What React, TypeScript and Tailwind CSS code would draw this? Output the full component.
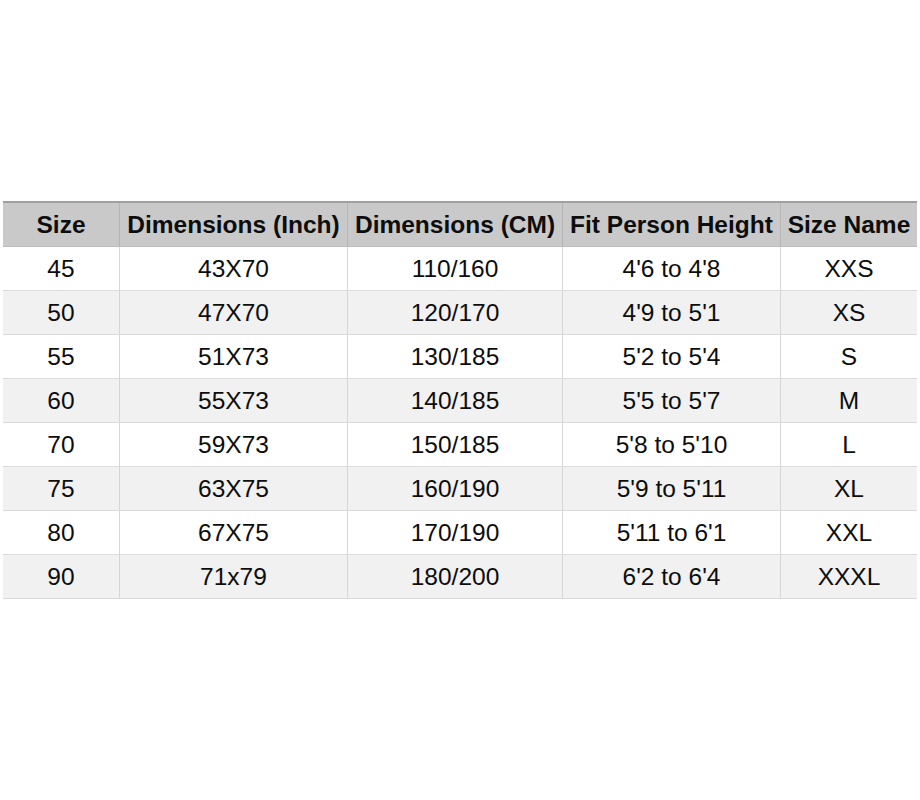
import React from 'react';

const headers = ['Size', 'Dimensions (Inch)', 'Dimensions (CM)', 'Fit Person Height', 'Size Name'];

const rows: string[][] = [
  ['45', '43X70', '110/160', "4'6 to 4'8", 'XXS'],
  ['50', '47X70', '120/170', "4'9 to 5'1", 'XS'],
  ['55', '51X73', '130/185', "5'2 to 5'4", 'S'],
  ['60', '55X73', '140/185', "5'5 to 5'7", 'M'],
  ['70', '59X73', '150/185', "5'8 to 5'10", 'L'],
  ['75', '63X75', '160/190', "5'9 to 5'11", 'XL'],
  ['80', '67X75', '170/190', "5'11 to 6'1", 'XXL'],
  ['90', '71x79', '180/200', "6'2 to 6'4", 'XXXL'],
];

const cols = 'grid grid-cols-[116px_228px_215px_218px_137px]';

export default function App() {
  return (
    <div className="w-[920px] h-[800px] bg-white pt-[201px] pl-[3px] font-['Liberation_Sans',Arial,sans-serif] text-[#0d0d0d]">
      <div className="w-[914px] border-t-2 border-[#a0a0a0]">
        <div className={`${cols} h-[44px] bg-[#c9c9c9] border-b border-[#bdbdbd]`}>
          {headers.map((h, i) => (
            <div
              key={h}
              className={`flex items-center justify-center pt-[2px] text-[24.5px] font-bold ${i > 0 ? 'border-l border-[#b5b5b5]' : ''}`}
            >
              {h}
            </div>
          ))}
        </div>
        {rows.map((r, ri) => (
          <div
            key={r[0]}
            className={`${cols} h-[44px] border-b border-[#dadada] ${ri % 2 === 1 ? 'bg-[#f1f1f1]' : 'bg-white'}`}
          >
            {r.map((c, ci) => (
              <div
                key={ci}
                className={`flex items-center justify-center pt-[2px] text-[24.5px] ${ci > 0 ? 'border-l border-[#d6d6d6]' : ''}`}
              >
                {c}
              </div>
            ))}
          </div>
        ))}
      </div>
    </div>
  );
}
